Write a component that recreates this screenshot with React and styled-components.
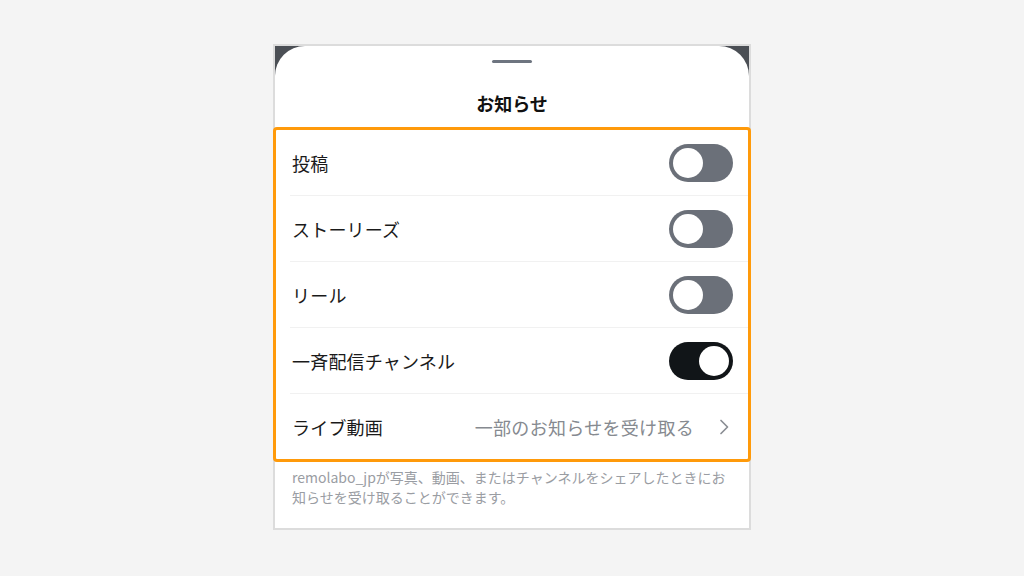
import React, { useState } from "react";
import styled, { createGlobalStyle } from "styled-components";

const GlobalStyle = createGlobalStyle`
  html, body {
    margin: 0;
    padding: 0;
    background: #f4f4f4;
    font-family: "Noto Sans CJK JP", "Noto Sans", sans-serif;
    -webkit-font-smoothing: antialiased;
  }
`;

const Page = styled.div`
  display: flex;
  justify-content: center;
  padding-top: 44px;
  height: 576px;
  box-sizing: border-box;
`;

const Frame = styled.div`
  width: 478px;
  height: 486px;
  box-sizing: border-box;
  border: 2px solid #dcdcdc;
  background: #4b4f55;
  display: flex;
  flex-direction: column;
`;

const Sheet = styled.div`
  flex: 1;
  background: #ffffff;
  border-radius: 30px 30px 0 0;
  display: flex;
  flex-direction: column;
`;

const Handle = styled.div`
  width: 40px;
  height: 3px;
  border-radius: 2px;
  background: #6e7580;
  margin: 14px auto 0;
`;

const Title = styled.div`
  padding: 28px 0 12px;
  line-height: 24px;
  font-size: 18px;
  font-weight: 700;
  color: #111;
  text-align: center;
`;

const Highlight = styled.div`
  margin: 0 -2px;
  border: 3px solid #ff9a0a;
  border-radius: 4px;
  background: #fff;
  display: flex;
  flex-direction: column;
`;

const Row = styled.div`
  height: 65px;
  margin-left: 14px;
  padding: 0 15px 0 2px;
  display: flex;
  align-items: center;
  justify-content: space-between;
  border-bottom: ${({ last }) => (last ? "none" : "1px solid #f1f1f1")};
`;

const Label = styled.span`
  font-size: 18px;
  color: #1a1a1a;
  letter-spacing: 0.2px;
`;

const Value = styled.span`
  display: flex;
  align-items: center;
  gap: 25px;
  font-size: 18px;
  color: #868a90;
  letter-spacing: 0.3px;
  padding-right: 4px;
`;

const Track = styled.button`
  width: 64px;
  height: 38px;
  border: none;
  padding: 0;
  border-radius: 19px;
  background: ${({ on }) => (on ? "#111518" : "#6b7079")};
  position: relative;
  cursor: pointer;
`;

const Thumb = styled.span`
  position: absolute;
  top: 4px;
  left: ${({ on }) => (on ? "30px" : "4px")};
  width: 30px;
  height: 30px;
  border-radius: 50%;
  background: #fff;
`;

const Footer = styled.p`
  margin: 0;
  padding: 5px 12px 0 17px;
  font-size: 14px;
  line-height: 20px;
  color: #9a9da3;
`;

function Toggle({ on, onClick }) {
  return (
    <Track on={on ? 1 : 0} onClick={onClick}>
      <Thumb on={on ? 1 : 0} />
    </Track>
  );
}

const Chevron = () => (
  <svg width="10" height="16" viewBox="0 0 10 16" fill="none">
    <polyline
      points="2,1.5 8.5,8 2,14.5"
      stroke="#8b8e94"
      strokeWidth="1.7"
      strokeLinecap="round"
      strokeLinejoin="round"
    />
  </svg>
);

export default function App() {
  const [toggles, setToggles] = useState({
    post: false,
    story: false,
    reel: false,
    channel: true,
  });

  const flip = (key) => setToggles({ ...toggles, [key]: !toggles[key] });

  const items = [
    { key: "post", label: "投稿" },
    { key: "story", label: "ストーリーズ" },
    { key: "reel", label: "リール" },
    { key: "channel", label: "一斉配信チャンネル" },
  ];

  return (
    <>
      <GlobalStyle />
      <Page>
        <Frame>
          <Sheet>
            <Handle />
            <Title>お知らせ</Title>
            <Highlight>
              {items.map((item) => (
                <Row key={item.key}>
                  <Label>{item.label}</Label>
                  <Toggle on={toggles[item.key]} onClick={() => flip(item.key)} />
                </Row>
              ))}
              <Row last>
                <Label>ライブ動画</Label>
                <Value>
                  一部のお知らせを受け取る
                  <Chevron />
                </Value>
              </Row>
            </Highlight>
            <Footer>
              remolabo_jpが写真、動画、またはチャンネルをシェアしたときにお
              <br />
              知らせを受け取ることができます。
            </Footer>
          </Sheet>
        </Frame>
      </Page>
    </>
  );
}
